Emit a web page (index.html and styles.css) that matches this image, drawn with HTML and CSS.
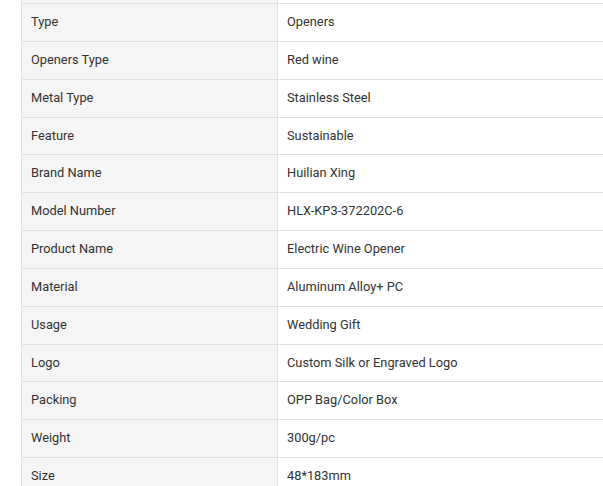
FILE: index.html
```html
<!DOCTYPE html>
<html>
<head>
<meta charset="utf-8">
<link rel="stylesheet" href="styles.css">
</head>
<body>
<div class="page">
<table class="specs">
<tbody>
<tr class="cut"><td class="label">&nbsp;</td><td class="value">&nbsp;</td></tr>
<tr><td class="label">Type</td><td class="value">Openers</td></tr>
<tr><td class="label">Openers Type</td><td class="value">Red wine</td></tr>
<tr><td class="label">Metal Type</td><td class="value">Stainless Steel</td></tr>
<tr><td class="label">Feature</td><td class="value">Sustainable</td></tr>
<tr><td class="label">Brand Name</td><td class="value">Huilian Xing</td></tr>
<tr><td class="label">Model Number</td><td class="value">HLX-KP3-372202C-6</td></tr>
<tr><td class="label">Product Name</td><td class="value">Electric Wine Opener</td></tr>
<tr><td class="label">Material</td><td class="value">Aluminum Alloy+ PC</td></tr>
<tr><td class="label">Usage</td><td class="value">Wedding Gift</td></tr>
<tr><td class="label">Logo</td><td class="value">Custom Silk or Engraved Logo</td></tr>
<tr><td class="label">Packing</td><td class="value">OPP Bag/Color Box</td></tr>
<tr><td class="label">Weight</td><td class="value">300g/pc</td></tr>
<tr><td class="label">Size</td><td class="value">48*183mm</td></tr>
</tbody>
</table>
</div>
</body>
</html>
```
FILE: styles.css
```css
html, body {
  margin: 0;
  padding: 0;
  overflow: hidden;
  background: #ffffff;
}
.page {
  padding-left: 21px;
  margin-top: -34.85px;
}
.specs {
  border-collapse: collapse;
  width: 600px;
  table-layout: fixed;
  font-family: Roboto, "Liberation Sans", sans-serif;
  font-size: 12.8px;
  color: #333333;
}
.specs td {
  border: 1px solid #e1e1e1;
  padding: 10px 9px;
  line-height: 16.85px;
  text-align: left;
  vertical-align: middle;
}
.specs .label {
  width: 237px;
  background: #f5f5f5;
}
.specs .value {
  background: #ffffff;
}
```
